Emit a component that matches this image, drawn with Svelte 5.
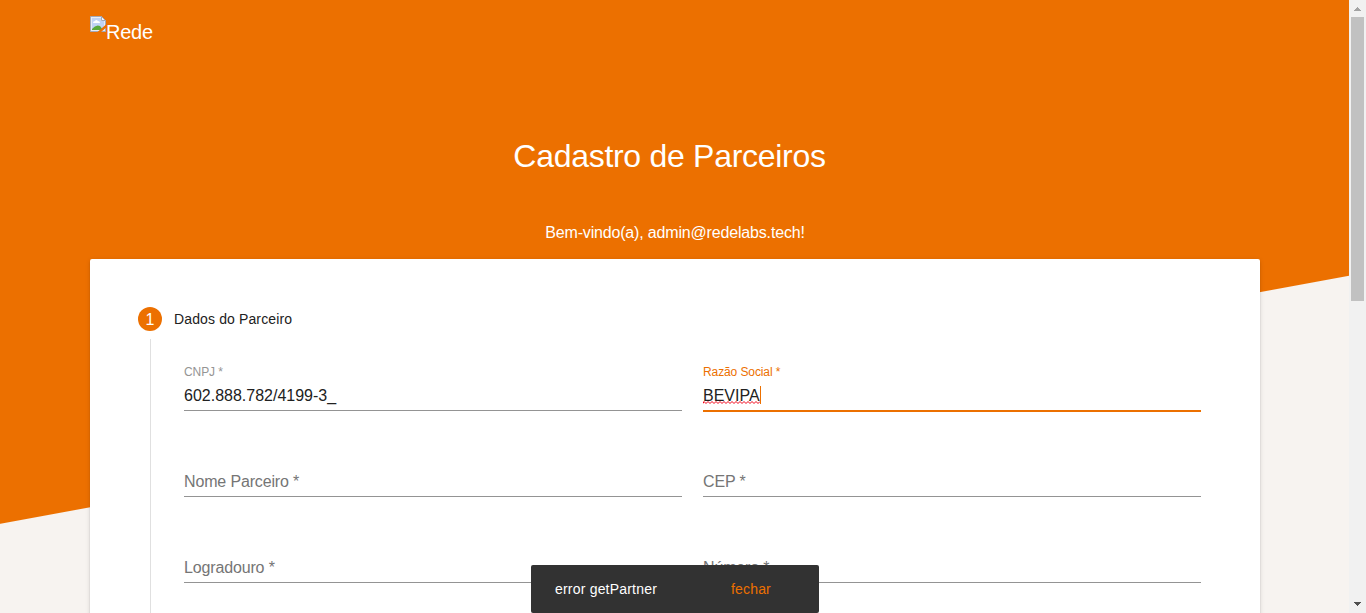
<script>
  const rows = [
    [
      { label: 'CNPJ *', value: '602.888.782/4199-3_' },
      { label: 'Razão Social *', value: 'BEVIPA', focused: true }
    ],
    [{ label: 'Nome Parceiro *' }, { label: 'CEP *' }],
    [{ label: 'Logradouro *' }, { label: 'Número *' }]
  ];
</script>

<div class="window">
  <div class="page">
    <header>
      <div class="logo">
        <svg width="16" height="16" viewBox="0 0 16 16">
          <path d="M.5.5h11l4 4v11H.5z" fill="#e9edf5" stroke="#a3a9b9" />
          <path d="M2 2h9v3h3v9H2z" fill="#c0d3f5" />
          <path d="M3 7q0-2 2-2 1-2 3 0 2 0 2 2z" fill="#fff" />
          <path d="M2 14v-1q4-5 8-3l3 4z" fill="#5aa93a" />
          <path d="M11.5.5v4h4z" fill="#f5f7fa" stroke="#a3a9b9" />
          <path d="M7.5 16L16 8.5v3.2L11 16z" fill="#ec7000" />
        </svg><span>Rede</span>
      </div>
      <h1>Cadastro de Parceiros</h1>
      <p>Bem-vindo(a), admin@redelabs.tech!</p>
    </header>

    <main>
      <div class="step">
        <span class="badge">1</span>
        <span class="step-title">Dados do Parceiro</span>
      </div>
      <div class="step-body">
        {#each rows as row}
          <div class="row">
            {#each row as field}
              <div class="field" class:focused={field.focused}>
                {#if field.value}
                  <div class="label">{field.label}</div>
                  <div class="value">
                    <span>{field.value}</span>{#if field.focused}<i class="caret"></i>
                      <svg class="squiggle" width="57" height="3" viewBox="0 0 57 3">
                        <path
                          d={'M0 2.5' + Array.from({ length: 29 }, (_, i) => `L${i * 2 + 1} ${i % 2 ? 2.5 : 0.5}`).join('')}
                          fill="none"
                          stroke="#f00016"
                        />
                      </svg>
                    {/if}
                  </div>
                {:else}
                  <div class="placeholder">{field.label}</div>
                {/if}
              </div>
            {/each}
          </div>
        {/each}
      </div>
    </main>
  </div>

  <div class="scrollbar">
    <svg width="17" height="17" viewBox="0 0 17 17" shape-rendering="crispEdges">
      <path d="M8 7h1v1h1v1h1v1h1v1H5v-1h1V9h1V8h1z" fill="#a3a3a3" />
    </svg>
    <div class="thumb"></div>
    <svg class="down" width="17" height="17" viewBox="0 0 17 17" shape-rendering="crispEdges">
      <path d="M5 6h7v1h-1v1h-1v1H9v1H8V9H7V8H6V7H5z" fill="#505050" />
    </svg>
  </div>

  <div class="snackbar">
    <span class="message">error getPartner</span>
    <span class="action">fechar</span>
  </div>
</div>

<style>
  :global(body) {
    overflow: hidden;
  }
  .window {
    position: relative;
    display: flex;
    width: 1366px;
    height: 613px;
    overflow: hidden;
    font-family: 'Liberation Sans', Arial, sans-serif;
    font-size: 16px;
    color: #212121;
  }
  .page {
    width: 1349px;
    height: 613px;
    overflow: hidden;
    box-sizing: border-box;
    padding: 0 89px 0 90px;
    background: linear-gradient(169.58deg, #ec7000 0 514.7px, #f7f3f0 515.7px);
  }
  header {
    height: 259px;
    display: flex;
    flex-direction: column;
    color: #fff;
  }
  .logo {
    display: flex;
    height: 32px;
    padding-top: 16px;
    font-size: 20px;
    line-height: 32px;
    letter-spacing: -0.25px;
  }
  .logo svg {
    flex: none;
  }
  h1 {
    margin: 88px 11px 0 0;
    font-size: 32px;
    line-height: 40px;
    font-weight: 400;
    text-align: center;
    letter-spacing: -0.29px;
  }
  p {
    margin: 47px 0 0;
    line-height: 20px;
    text-align: center;
    letter-spacing: -0.17px;
  }
  main {
    box-sizing: border-box;
    height: 420px;
    padding: 48px 59px 0 48px;
    background: #fff;
    border-radius: 2px;
    box-shadow:
      0 3px 1px -2px rgba(0, 0, 0, 0.2),
      0 2px 2px rgba(0, 0, 0, 0.14),
      0 1px 5px rgba(0, 0, 0, 0.12);
  }
  .step {
    display: flex;
    align-items: center;
    gap: 12px;
    height: 24px;
  }
  .badge {
    width: 24px;
    height: 24px;
    border-radius: 50%;
    background: #ec7000;
    color: #fff;
    line-height: 25px;
    text-align: center;
  }
  .step-title {
    font-size: 14px;
    letter-spacing: 0.13px;
  }
  .step-body {
    margin: 8px 0 0 12px;
    padding: 25px 0 0 33px;
    height: 300px;
    border-left: 1px solid #e0e0e0;
  }
  .row {
    display: flex;
    gap: 21px;
    height: 86px;
  }
  .field {
    box-sizing: border-box;
    width: 498px;
    height: 47px;
    border-bottom: 1px solid #949494;
    color: #757575;
  }
  .focused {
    height: 48px;
    border-bottom: 2px solid #ec7000;
  }
  .label {
    height: 18px;
    font-size: 12px;
    line-height: 17px;
    letter-spacing: -0.1px;
    color: #949494;
  }
  .focused .label {
    color: #ec7000;
  }
  .value {
    position: relative;
    display: flex;
    height: 26px;
    line-height: 28px;
    color: #212121;
  }
  .caret {
    width: 1px;
    height: 18px;
    margin-top: 4px;
    background: #ec7000;
  }
  .squiggle {
    position: absolute;
    left: 0;
    top: 19px;
  }
  .placeholder {
    padding-top: 22px;
    line-height: 20px;
    letter-spacing: -0.15px;
  }
  .scrollbar {
    width: 17px;
    height: 613px;
    display: flex;
    flex-direction: column;
    background: #f1f1f1;
  }
  .scrollbar svg {
    flex: none;
  }
  .thumb {
    width: 13px;
    height: 284px;
    margin-left: 2px;
    background: #c1c1c1;
  }
  .down {
    margin-top: auto;
  }
  .snackbar {
    position: absolute;
    left: 531px;
    top: 565px;
    box-sizing: border-box;
    width: 288px;
    height: 48px;
    padding: 0 48px 0 24px;
    display: flex;
    align-items: center;
    justify-content: space-between;
    border-radius: 2px;
    background: #323232;
    color: #fff;
    font-size: 14px;
  }
  .message {
    letter-spacing: 0.2px;
  }
  .action {
    color: #ec7000;
    letter-spacing: 0.2px;
  }
</style>
